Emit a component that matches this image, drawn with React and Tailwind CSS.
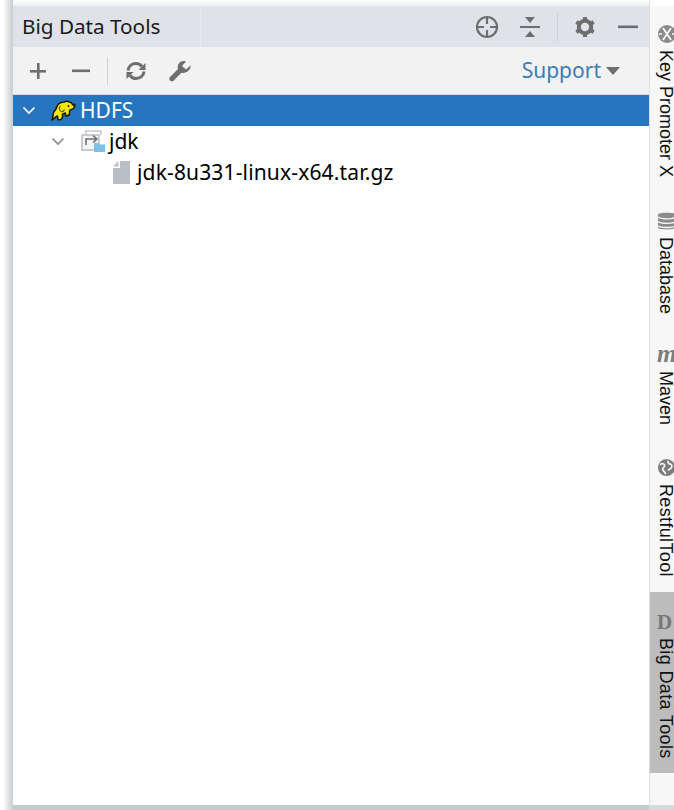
import React from "react";

const font = "font-['Noto_Sans','Open_Sans',sans-serif]";

// Elephant logo on the HDFS row
const Elephant = () => (
  <svg width="26" height="22" viewBox="0 0 26 22">
    <path d="M1.500 20c1.500-1 1.500-2 1.500-4 0-3 1-5 3-7 1-4 4-7 8-7 2-1 4-1 5 0 2 0 3 1 3.500 2.500.5 1 1.500 1 2-.5.800 2-.5 5-3 5.500-1 .2-2 .5-2 1.500v3.500l-2.500 1.500-1.500-.5V13l-3 1v3.500l-1.500 2-3 .2-.5-3.700c-2 .5-3 3-6 4z" fill="#f5e609" stroke="#1b1b00" strokeWidth="1.500" strokeLinejoin="round" />
    <path d="M10.500 6c-2 1.500-1.500 4.500 1 5.500 1.500.5 2.500-.5 3-2" fill="none" stroke="#6d6600" strokeWidth="1.200" />
    <circle cx="18.500" cy="6" r="0.900" fill="#1b1b00" />
  </svg>
);

const Chevron = ({ color }) => (
  <svg width="14" height="9" viewBox="0 0 14 9">
    <path d="M1.500 1.500 7 7l5.500-5.500" fill="none" stroke={color} strokeWidth="1.700" />
  </svg>
);

const Crosshair = () => (
  <svg width="24" height="24" viewBox="0 0 24 24" fill="none" stroke="#6e6e6e" strokeWidth="2.200">
    <circle cx="12" cy="12" r="10" />
    <path d="M12 2v7M12 15v7M2 12h7M15 12h7" />
  </svg>
);

const Collapse = () => (
  <svg width="22" height="24" viewBox="0 0 22 24" fill="#6e6e6e">
    <path d="M6 2h10l-5 6zM6 22h10l-5-6z" />
    <rect x="1" y="11" width="20" height="2" />
  </svg>
);

const Gear = () => (
  <svg width="22" height="22" viewBox="0 0 22 22">
    <circle cx="11" cy="11" r="6.200" fill="none" stroke="#6e6e6e" strokeWidth="4" />
    <path d="M11 1v20M2.300 6l17.400 10M2.300 16 19.700 6" stroke="#6e6e6e" strokeWidth="4" strokeDasharray="4 12" />
  </svg>
);

const Plus = () => (
  <svg width="18" height="18" viewBox="0 0 18 18" fill="#6e6e6e">
    <rect x="8" y="1" width="2.600" height="16" />
    <rect x="1" y="8" width="16" height="2.600" />
  </svg>
);

const Minus = ({ w = 18 }) => (
  <svg width={w} height="4" viewBox={`0 0 ${w} 4`}>
    <rect x="0" y="0.500" width={w} height="2.600" fill="#6e6e6e" />
  </svg>
);

const Refresh = () => (
  <svg width="22" height="22" viewBox="0 0 22 22" fill="none" stroke="#6e6e6e" strokeWidth="3">
    <path d="M3 10.500C3.500 6 7 3.500 11 3.500c2.500 0 4.500 1 6 3" />
    <path d="M19 11.500c-.5 4.500-4 7-8 7-2.500 0-4.500-1-6-3" />
    <path d="M20.500 3v7h-7z" fill="#6e6e6e" strokeWidth="0" />
    <path d="M1.500 19v-7h7z" fill="#6e6e6e" strokeWidth="0" />
  </svg>
);

const Wrench = () => (
  <svg width="24" height="24" viewBox="0 0 24 24">
    <path d="M22.500 6.500 18 10.500l-4-3.500 4-4.500c-3-1-6 0-7.500 2.500-1 2-1 3.500-.5 5L2 18c-1 1-1 2.500 0 3.500s2.500 1.200 3.500.2l8-8c2 .5 4 .2 6-1.200 2.500-1.800 3.500-4 3-6z" fill="#6e6e6e" />
  </svg>
);

const ModuleIcon = () => (
  <svg width="25" height="23" viewBox="0 0 25 23">
    <path d="M5 5V1h15v4" fill="none" stroke="#c4c7cb" strokeWidth="1.500" />
    <rect x="1" y="5" width="17" height="15" fill="#f4f5f6" stroke="#b9bcc0" strokeWidth="1.500" />
    <path d="M5 15V9h10M12 5.500 16 9l-4 3.500" fill="none" stroke="#6e6e6e" strokeWidth="1.600" />
    <path d="M13 13h5l1 1.500h5V22H13z" fill="#7cc0e4" />
  </svg>
);

const FileIcon = () => (
  <svg width="17" height="23" viewBox="0 0 17 23">
    <path d="M7 0h10v23H0V7h7zM5.500 0v5.500H0z" fill="#b9bfc4" />
  </svg>
);

const Row = ({ children, className }) => (
  <div className={`flex h-[31px] items-center ${className}`}>{children}</div>
);

const SideTab = ({ icon, label, className, labelClass = "" }) => (
  <div className={`flex flex-col ${className}`}>
    <div className="flex h-[20px] overflow-hidden pl-[7px]">{icon}</div>
    <div className={`mt-[6px] pl-[7px] font-['Liberation_Sans',sans-serif] text-[18px] leading-[17px] text-[#111] [writing-mode:vertical-rl] ${labelClass}`}>
      {label}
    </div>
  </div>
);

export default function App() {
  return (
    <div className={`flex h-[810px] w-[674px] overflow-hidden bg-white ${font}`}>
      {/* shadow on the left of the tool window */}
      <div className="h-full w-[13px] shrink-0 bg-gradient-to-r from-white from-20% to-[#c9cdd0]" />

      <div className="flex h-full w-[636px] shrink-0 flex-col">
        <div className="h-[6px] shrink-0 bg-gradient-to-b from-white to-[#eceef0]" />

        {/* title bar */}
        <div className="flex h-[41px] shrink-0 items-center bg-[#dfe2e8]">
          <div className="flex h-full w-[188px] items-center border-r border-[#e9ebef] pl-[9px] text-[20.700px] text-[#1a1a1a]">
            Big Data Tools
          </div>
          <div className="ml-auto flex items-center">
            <Crosshair />
            <div className="ml-[20px]"><Collapse /></div>
            <div className="ml-[16px] h-[28px] w-px bg-[#cfd2d6]" />
            <div className="ml-[16px]"><Gear /></div>
            <div className="ml-[22px] mr-[11px]"><Minus w={20} /></div>
          </div>
        </div>

        {/* toolbar */}
        <div className="flex h-[48px] shrink-0 items-center border-b border-[#d9dde2] bg-[#f2f2f2] pl-[16px]">
          <Plus />
          <div className="ml-[25px]"><Minus /></div>
          <div className="ml-[17px] h-[28px] w-px bg-[#d0d0d0]" />
          <div className="ml-[17px]"><Refresh /></div>
          <div className="ml-[21px]"><Wrench /></div>
          <div className="ml-auto flex items-center pr-[29px] text-[21px] text-[#3d7cb6]">
            Support
            <span className="ml-[5px] h-0 w-0 border-x-[7px] border-t-[8px] border-x-transparent border-t-[#6e6e6e]" />
          </div>
        </div>

        {/* tree */}
        <Row className="bg-[#2675bf] pl-[9px] text-[21px] text-white">
          <Chevron color="#ffffff" />
          <div className="ml-[14px]"><Elephant /></div>
          <span className="ml-[4px]">HDFS</span>
        </Row>
        <Row className="pl-[38px] text-[21px] text-black">
          <Chevron color="#8c8c8c" />
          <div className="ml-[16px]"><ModuleIcon /></div>
          <span className="ml-[3px]">jdk</span>
        </Row>
        <Row className="pl-[100px] text-[21px] tracking-[0.15px] text-black">
          <FileIcon />
          <span className="ml-[7px]">jdk-8u331-linux-x64.tar.gz</span>
        </Row>

        <div className="flex-1" />
        <div className="h-[5px] shrink-0 bg-[#c3cbcf]" />
      </div>

      {/* right tool window bar */}
      <div className="flex h-full flex-1 flex-col overflow-hidden border-l border-[#dcdee0] bg-[#f7f7f7]">
        <div className="h-[6px] shrink-0 bg-white" />
        <SideTab
          className="mt-[18px]"
          label="Key Promoter X"
          icon={
            <svg width="20" height="20" viewBox="0 0 20 20" className="shrink-0">
              <circle cx="10" cy="10" r="9" fill="#8a8a8a" />
              <path d="M6 4l8 12M14 4 6 16" stroke="#f7f7f7" strokeWidth="1.800" />
              <path d="M2 10h3M15 10h3" stroke="#f7f7f7" strokeWidth="1.500" />
            </svg>
          }
        />
        <SideTab
          className="mt-[34px]"
          label="Database"
          icon={
            <svg width="20" height="20" viewBox="0 0 20 20" className="shrink-0">
              <path d="M1 3.500C1 1 19 1 19 3.500v13c0 2.500-18 2.500-18 0z" fill="#8b8b8b" />
              <path d="M1 6c3 2.500 15 2.500 18 0M1 10.500c3 2.500 15 2.500 18 0M1 15c3 2 15 2 18 0" fill="none" stroke="#f7f7f7" strokeWidth="1.300" />
            </svg>
          }
        />
        <SideTab
          className="mt-[31px]"
          label="Maven"
          icon={
            <div className="font-['Liberation_Serif',serif] text-[25px] font-bold italic leading-[18px] text-[#7d7d7d]">m</div>
          }
        />
        <SideTab
          className="mt-[33px]"
          label="RestfulTool"
          labelClass="tracking-[0.35px]"
          icon={
            <svg width="19" height="19" viewBox="0 0 20 20" className="shrink-0">
              <circle cx="10" cy="10" r="9" fill="#7d7d7d" />
              <path d="M3 7c3-2 5-1 5 1s-2 2-2 4 3 2 3 5M12 3c-1 2 0 3 2 3.500s2 2 1 4-3 .5-3 3" fill="none" stroke="#f7f7f7" strokeWidth="1.800" />
            </svg>
          }
        />
        <SideTab
          className="mt-[15px] h-[181px] bg-[#bcbcbc] pt-[20px]"
          label="Big Data Tools"
          labelClass="tracking-[0.35px]"
          icon={
            <div className="font-['Liberation_Serif',serif] text-[21px] font-bold leading-[20px] text-[#777]">D</div>
          }
        />
        <div className="flex-1" />
        <div className="h-[5px] shrink-0 bg-[#d5d9db]" />
      </div>
    </div>
  );
}
